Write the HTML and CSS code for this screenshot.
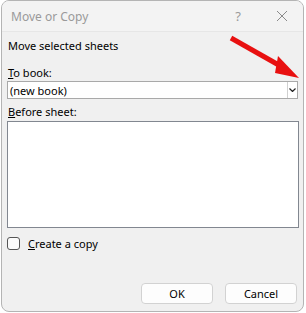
FILE: index.html
```html
<!DOCTYPE html>
<html>
<head>
<meta charset="utf-8">
<link rel="stylesheet" href="styles.css">
</head>
<body>
<div class="window">
  <div class="titlebar">
    <span class="title">Move or Copy</span>
    <span class="help">?</span>
    <svg class="close" width="12" height="12" viewBox="0 0 12 12"><path d="M1 1L11 11M11 1L1 11" stroke="#8a8a8a" stroke-width="1"/></svg>
  </div>
  <div class="content">
    <div class="heading">Move selected sheets</div>
    <div class="label"><u>T</u>o book:</div>
    <div class="select">
      <span class="select-text">(new book)</span>
      <span class="select-btn"><svg width="7" height="4" viewBox="0 0 7 4"><path d="M0.5 0.5L3.5 3.5L6.5 0.5" fill="none" stroke="#222" stroke-width="1.2"/></svg></span>
    </div>
    <div class="label label2"><u>B</u>efore sheet:</div>
    <div class="listbox"></div>
    <div class="check-row">
      <span class="checkbox"></span>
      <span class="check-label"><u>C</u>reate a copy</span>
    </div>
    <div class="spacer"></div>
    <div class="buttons">
      <button class="btn">OK</button>
      <button class="btn">Cancel</button>
    </div>
  </div>
  <svg class="arrow" width="80" height="50" viewBox="0 0 80 50">
    <path d="M3 3L56 33" stroke="#e81010" stroke-width="5" stroke-linecap="butt"/>
    <polygon points="50,21 71,43 47,38" fill="#e81010"/>
  </svg>
</div>
</body>
</html>
```
FILE: styles.css
```css
html, body {
  margin: 0;
  padding: 0;
  background: #ffffff;
}
body {
  font-family: "Noto Sans", "Open Sans", sans-serif;
  font-size: 11px;
  color: #000;
}
.window {
  position: relative;
  box-sizing: border-box;
  margin-left: 1px;
  width: 303px;
  height: 312px;
  border: 1px solid #b4b4b4;
  border-radius: 8px;
  background: #f0f0f0;
  overflow: hidden;
  display: flex;
  flex-direction: column;
}
.titlebar {
  height: 30px;
  flex: none;
  background: #f3f3f3;
  border-bottom: 1px solid #e6e6e6;
  display: flex;
  align-items: center;
  padding-left: 9px;
}
.title {
  color: #9a9a9a;
  font-size: 12px;
  flex: 1;
}
.help {
  color: #9a9a9a;
  font-size: 13px;
  margin-right: 35px;
}
.close {
  margin-right: 15px;
}
.content {
  flex: 1;
  display: flex;
  flex-direction: column;
  padding: 6px 4px 7px 5px;
}
.heading {
  line-height: 16px;
  padding-left: 1px;
}
.label {
  margin-top: 11px;
  line-height: 16px;
  padding-left: 1px;
}
.label2 {
  margin-top: 5px;
}
.select {
  height: 18px;
  box-sizing: border-box;
  border: 1px solid #a9a9a9;
  background: #fff;
  display: flex;
  align-items: center;
  margin-right: 1px;
}
.select-text {
  flex: 1;
  padding-left: 2px;
}
.select-btn {
  width: 9px;
  height: 16px;
  border-left: 1px solid #d0d0d0;
  display: flex;
  align-items: center;
  justify-content: center;
}
.listbox {
  margin-top: 1px;
  height: 107px;
  box-sizing: border-box;
  border: 1px solid #828790;
  background: #fff;
}
.check-row {
  display: flex;
  align-items: center;
  margin-top: 8px;
}
.checkbox {
  width: 13px;
  height: 13px;
  box-sizing: border-box;
  border: 1px solid #555;
  border-radius: 3px;
  background: #fbfbfb;
}
.check-label {
  margin-left: 8px;
}
.spacer {
  flex: 1;
}
.buttons {
  display: flex;
  justify-content: flex-end;
  gap: 12px;
  padding-right: 2px;
}
.btn {
  width: 72px;
  height: 21px;
  box-sizing: border-box;
  border: 1px solid #d2d2d2;
  border-radius: 4px;
  background: #fdfdfd;
  font-family: "Noto Sans", "Open Sans", sans-serif;
  font-size: 11px;
  color: #000;
  padding: 0;
}
.arrow {
  position: absolute;
  left: 226px;
  top: 34px;
}
```
